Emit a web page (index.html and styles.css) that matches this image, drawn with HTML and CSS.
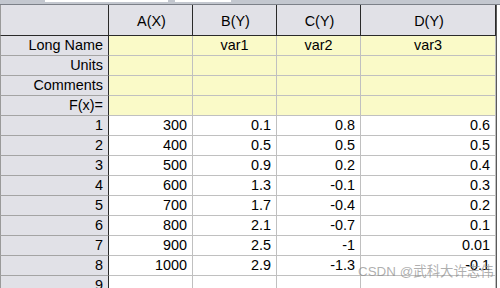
FILE: index.html
```html
<!DOCTYPE html>
<html>
<head>
<meta charset="utf-8">
<link rel="stylesheet" href="styles.css">
</head>
<body>
<div class="page">
  <div class="strip"><span class="box box-a"></span><span class="box box-b"></span></div>
  <div class="sheet">
    <div class="c hd corner"></div><div class="c hd">A(X)</div><div class="c hd">B(Y)</div><div class="c hd">C(Y)</div><div class="c hd">D(Y)</div>

    <div class="c rh">Long Name</div><div class="c meta"></div><div class="c meta mid">var1</div><div class="c meta mid">var2</div><div class="c meta mid">var3</div>
    <div class="c rh">Units</div><div class="c meta"></div><div class="c meta"></div><div class="c meta"></div><div class="c meta"></div>
    <div class="c rh">Comments</div><div class="c meta"></div><div class="c meta"></div><div class="c meta"></div><div class="c meta"></div>
    <div class="c rh">F(x)=</div><div class="c meta"></div><div class="c meta"></div><div class="c meta"></div><div class="c meta"></div>

    <div class="c rh">1</div><div class="c d">300</div><div class="c d">0.1</div><div class="c d">0.8</div><div class="c d">0.6</div>
    <div class="c rh">2</div><div class="c d">400</div><div class="c d">0.5</div><div class="c d">0.5</div><div class="c d">0.5</div>
    <div class="c rh">3</div><div class="c d">500</div><div class="c d">0.9</div><div class="c d">0.2</div><div class="c d">0.4</div>
    <div class="c rh">4</div><div class="c d">600</div><div class="c d">1.3</div><div class="c d">-0.1</div><div class="c d">0.3</div>
    <div class="c rh">5</div><div class="c d">700</div><div class="c d">1.7</div><div class="c d">-0.4</div><div class="c d">0.2</div>
    <div class="c rh">6</div><div class="c d">800</div><div class="c d">2.1</div><div class="c d">-0.7</div><div class="c d">0.1</div>
    <div class="c rh">7</div><div class="c d">900</div><div class="c d">2.5</div><div class="c d">-1</div><div class="c d">0.01</div>
    <div class="c rh">8</div><div class="c d">1000</div><div class="c d">2.9</div><div class="c d">-1.3</div><div class="c d">-0.1</div>
    <div class="c rh">9</div><div class="c d"></div><div class="c d"></div><div class="c d"></div><div class="c d"></div>
  </div>
  <div class="watermark">CSDN @武科大许志伟</div>
</div>
</body>
</html>
```
FILE: styles.css
```css
html, body {
  margin: 0;
  padding: 0;
  background: #ffffff;
}
body {
  font-family: "Liberation Sans", Arial, sans-serif;
  font-size: 14.4px;
  color: #000;
}
.page {
  position: relative;
  width: 500px;
  height: 288px;
  overflow: hidden;
}
.strip {
  height: 4px;
  background: #c3c7cf;
  border-bottom: 1px solid #7c8088;
  display: flex;
  align-items: flex-start;
}
.box {
  display: block;
  height: 2px;
  background: #ffffff;
}
.box-a { width: 123px; margin-left: 45px; }
.box-b { width: 56px; margin-left: 7px; }
.sheet {
  display: grid;
  grid-template-columns: 109px 84px 84px 84px 135px;
  grid-template-rows: 31px repeat(13, 20px);
  width: 496px;
  border-right: 1px solid #5a5a5a;
}
.c {
  box-sizing: border-box;
  border-right: 1px solid #c0c0c0;
  border-bottom: 1px solid #c0c0c0;
  line-height: 19px;
  white-space: nowrap;
  overflow: hidden;
}
.hd {
  background: #e1e1e7;
  border-right-color: #2a2a2a;
  border-bottom-color: #2a2a2a;
  text-align: center;
  line-height: 32px;
  padding-left: 2px;
}
.corner {
  border-left: 1px solid #9a9a9a;
}
.rh {
  background: #e1e1e7;
  border-right-color: #2a2a2a;
  border-bottom-color: #a4a4a4;
  border-left: 1px solid #9a9a9a;
  text-align: right;
  padding-right: 5px;
}
.meta {
  background: #fafac8;
}
.mid {
  text-align: center;
}
.d {
  background: #ffffff;
  text-align: right;
  padding-right: 5px;
}
.watermark {
  position: absolute;
  left: 358px;
  top: 263px;
  font-family: "Liberation Sans", "Noto Sans CJK SC", sans-serif;
  font-size: 13.4px;
  color: rgba(140, 140, 140, 0.7);
  line-height: 18px;
}
```
